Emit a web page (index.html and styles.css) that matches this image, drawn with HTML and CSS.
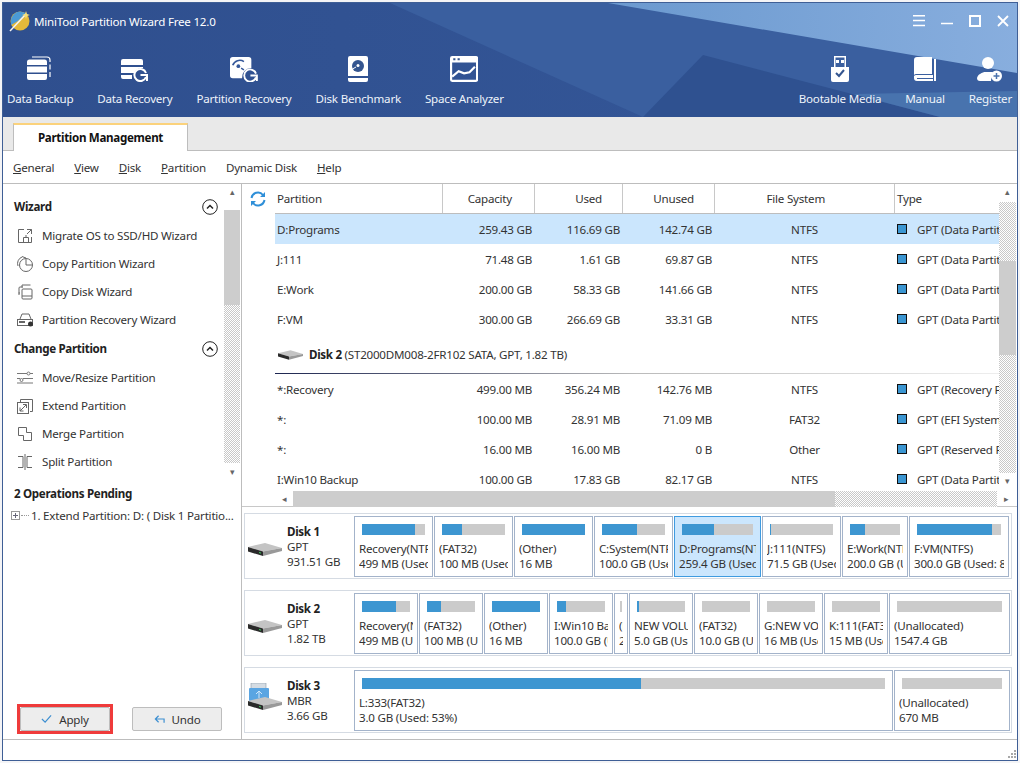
FILE: index.html
```html
<!DOCTYPE html>
<html lang="en">
<head>
<meta charset="utf-8">
<title>MiniTool Partition Wizard Free 12.0</title>
<link rel="stylesheet" href="styles.css">
</head>
<body>
<div class="window">
  <header class="header">
    <svg class="header-bg" viewBox="0 0 1014 114" preserveAspectRatio="none" aria-hidden="true">
      <defs>
        <linearGradient id="hg" x1="0" x2="1" y1="0" y2="0"><stop offset="0" stop-color="#2f4f8e"/><stop offset="1" stop-color="#35589a"/></linearGradient>
        <linearGradient id="hl" x1="0" x2="1" y1="0" y2="0"><stop offset="0" stop-color="#6b99cf"/><stop offset="1" stop-color="#88aede"/></linearGradient>
      </defs>
      <rect width="1014" height="114" fill="url(#hg)"/>
      <polygon points="387,0 1014,0 1014,114 640,114" fill="#3a5f9f"/>
      <polygon points="605,0 1014,0 1014,70" fill="url(#hl)"/>
      <polygon points="700,52 937,114 640,114" fill="#2f5190"/>
      <polygon points="937,114 1014,114 1014,88 850,91" fill="#4873ae"/>
    </svg>
    <div class="title-row">
      <svg class="logo" viewBox="0 0 22 22" aria-hidden="true">
        <circle cx="12" cy="11" r="9.5" fill="#e4b93a"/><path d="M3 11a9.500 9.500 0 0 1 9-9.500l6 1.500-8 8-7 4z" fill="#4b9ad6"/>
        <path d="M2 21L18 4" stroke="#f4f4f4" stroke-width="1.500"/><path d="M18 1l1 3 3 1-3 1-1 3-1-3-3-1 3-1z" fill="#f6e07a"/>
      </svg>
      <span class="title">MiniTool Partition Wizard Free 12.0</span>
      <div class="win-controls">
        <svg viewBox="0 0 12 12" aria-hidden="true"><path d="M0 .8h12M0 5.500h12M0 10.500h12" stroke="#fff" stroke-width="1.500"/></svg>
        <svg viewBox="0 0 12 12" aria-hidden="true"><path d="M0 8.500h12" stroke="#fff" stroke-width="1.500"/></svg>
        <svg viewBox="0 0 12 12" aria-hidden="true"><rect x="1" y="1" width="10" height="10" fill="none" stroke="#fff" stroke-width="2"/></svg>
        <svg viewBox="0 0 12 12" aria-hidden="true"><path d="M1 1l10 10M11 1L1 11" stroke="#fff" stroke-width="1.800"/></svg>
      </div>
    </div>
    <nav class="toolbar">
      <div class="tool-group">
        <div class="tool"><svg viewBox="0 0 26 26" aria-hidden="true"><path d="M0 6a2.500 2.500 0 0 1 2.500-2.500h15A2.500 2.500 0 0 1 20 6v3H0zM0 10.500h20v6H0zM0 18h20v4a2 2 0 0 1-2 2H2a2 2 0 0 1-2-2z" fill="#fff"/><path d="M5 1h15a3 3 0 0 1 3 3v2M23 8.500v5M23 16v5" fill="none" stroke="#fff" stroke-width="1.200"/></svg><span>Data Backup</span></div>
        <div class="tool"><svg viewBox="0 0 28 26" aria-hidden="true"><path d="M0 5a2 2 0 0 1 2-2h18a2 2 0 0 1 2 2v4H0zM0 11h22v1a9 9 0 0 0-9 5H0zM0 19h11v4H2a2 2 0 0 1-2-2z" fill="#fff"/><path d="M25 17a6 6 0 1 0 0 4M19.500 19h6.500v6" fill="none" stroke="#fff" stroke-width="2"/></svg><span>Data Recovery</span></div>
        <div class="tool"><svg viewBox="0 0 30 28" aria-hidden="true"><path d="M3 1h17a3 3 0 0 1 3 3v9a10 10 0 0 0-10 11H3a3 3 0 0 1-3-3V4a3 3 0 0 1 3-3z" fill="#fff"/><path d="M3 10a8 8 0 0 1 12-4" fill="none" stroke="#35589a" stroke-width="1.800"/><circle cx="9" cy="11" r="2" fill="#35589a"/><path d="M12 13l3 2" stroke="#35589a" stroke-width="1.500"/><path d="M28 19a6.500 6.500 0 1 0 0 4M22 21h7v6" fill="none" stroke="#fff" stroke-width="2"/></svg><span>Partition Recovery</span></div>
        <div class="tool"><svg viewBox="0 0 20 26" aria-hidden="true"><path d="M2 0h16a2 2 0 0 1 2 2v18H0V2a2 2 0 0 1 2-2zM0 22h20v2a2 2 0 0 1-2 2H2a2 2 0 0 1-2-2z" fill="#fff"/><circle cx="10" cy="10" r="6" fill="#34558f"/><circle cx="10" cy="9.500" r="1.500" fill="#fff"/><path d="M4.500 13l3.500-2" stroke="#fff"/></svg><span>Disk Benchmark</span></div>
        <div class="tool"><svg viewBox="0 0 26 24" aria-hidden="true"><path fill-rule="evenodd" d="M2 0h22a2 2 0 0 1 2 2v20a2 2 0 0 1-2 2H2a2 2 0 0 1-2-2V2a2 2 0 0 1 2-2zM2 6v16h22V6z" fill="#fff"/><path d="M3 2h2v2H3zM7 2h2v2H7z" fill="#34558f"/><path d="M2 19l6-5 5 2 5-1 5-5" fill="none" stroke="#fff" stroke-width="2"/></svg><span>Space Analyzer</span></div>
      </div>
      <div class="tool-group">
        <div class="tool"><svg viewBox="0 0 18 26" aria-hidden="true"><path fill-rule="evenodd" d="M3 0h12v11h3v13a2 2 0 0 1-2 2H2a2 2 0 0 1-2-2V11h3zM4.500 1.500V11h9V1.500z" fill="#fff"/><path d="M5 4h3v3H5zM10 4h3v3h-3z" fill="#fff"/><path d="M5 17l3 3 5-6" fill="none" stroke="#34558f" stroke-width="2"/></svg><span>Bootable Media</span></div>
        <div class="tool"><svg viewBox="0 0 24 26" aria-hidden="true"><path d="M5 1h14v17H4a3 3 0 0 0-3 1V4a3 3 0 0 1 3-3z" fill="#fff"/><path d="M1 20a3 3 0 0 1 3-1h16v3H4v1h16v2H4a3 3 0 0 1-3-3z" fill="#fff"/><path d="M21 3h2v22h-2z" fill="#fff"/></svg><span>Manual</span></div>
        <div class="tool"><svg viewBox="0 0 26 26" aria-hidden="true"><circle cx="11" cy="7" r="6" fill="#fff"/><path d="M0 22c1-4 5-5 7-6h8c2 1 3 1 4 2a7 7 0 0 0-5 7H3c-2 0-3-1-3-3z" fill="#fff"/><circle cx="19.500" cy="20" r="5.500" fill="#fff"/><path d="M16.500 20h6M19.500 17v6" stroke="#4a72ad" stroke-width="1.500"/></svg><span>Register</span></div>
      </div>
    </nav>
  </header>

  <div class="tabbar"><div class="tab">Partition Management</div></div>
  <div class="menubar">
    <span><u>G</u>eneral</span><span><u>V</u>iew</span><span><u>D</u>isk</span><span><u>P</u>artition</span><span>Dynamic Disk</span><span><u>H</u>elp</span>
  </div>

  <div class="workspace">
    <aside class="side">
      <div class="wizard-scroll">
        <div class="wizard-list">
          <div class="sec-title">Wizard<svg class="collapse" viewBox="0 0 16 16" aria-hidden="true"><circle cx="8" cy="8" r="7.300" fill="none" stroke="#222" stroke-width="1"/><path d="M5 9.500L8 6.500l3 3" fill="none" stroke="#222" stroke-width="1.500"/></svg></div>
          <div class="item"><svg viewBox="0 0 16 16" aria-hidden="true"><path d="M7 1.500H1.500v13h13V9M10 1.500h4.500V6M14.500 1.500L10 6M6.500 14.500V9.500h5v5M9 9.500V7" fill="none" stroke="#666"/></svg>Migrate OS to SSD/HD Wizard</div>
          <div class="item"><svg viewBox="0 0 16 16" aria-hidden="true"><path d="M5 1a7 7 0 0 0-4 9" fill="none" stroke="#666"/><circle cx="9" cy="9" r="6.500" fill="none" stroke="#666"/><path d="M9 3v6h6" fill="none" stroke="#666"/><path d="M5 .5l4 1.500" stroke="#666"/></svg>Copy Partition Wizard</div>
          <div class="item"><svg viewBox="0 0 16 16" aria-hidden="true"><path d="M5 3.500V1h8.500M2 11V4a1 1 0 0 1 1-1h3M3 9H1.500" fill="none" stroke="#666"/><rect x="5" y="5" width="10" height="10" rx="1" fill="none" stroke="#666"/><path d="M5 12h10" stroke="#666"/></svg>Copy Disk Wizard</div>
          <div class="item"><svg viewBox="0 0 16 16" aria-hidden="true"><path d="M3 7l2-5h7l2 5" fill="none" stroke="#666"/><rect x=".5" y="7.500" width="15" height="6" fill="#fff" stroke="#666"/><path d="M2 10h6" stroke="#666" stroke-width="2"/><circle cx="13.500" cy="12" r="2.500" fill="#333"/></svg>Partition Recovery Wizard</div>
          <div class="sec-title">Change Partition<svg class="collapse" viewBox="0 0 16 16" aria-hidden="true"><circle cx="8" cy="8" r="7.300" fill="none" stroke="#222" stroke-width="1"/><path d="M5 9.500L8 6.500l3 3" fill="none" stroke="#222" stroke-width="1.500"/></svg></div>
          <div class="item"><svg viewBox="0 0 16 16" aria-hidden="true"><path d="M0 3.500h10M13 3.500h3M0 8.500h3M6 8.500h10M0 13h16" stroke="#777"/><circle cx="11.500" cy="3.500" r="1.500" fill="#fff" stroke="#777"/><circle cx="4.500" cy="10" r="1.500" fill="#fff" stroke="#777"/></svg>Move/Resize Partition</div>
          <div class="item"><svg viewBox="0 0 16 16" aria-hidden="true"><path d="M3.500 4V1.500h12v12H13" fill="none" stroke="#666"/><rect x=".5" y="4.500" width="11" height="11" fill="#fff" stroke="#666"/><path d="M3 13L9 7M6 6.500h3.500V10M3 9.500V13h3.500" fill="none" stroke="#666"/></svg>Extend Partition</div>
          <div class="item"><svg viewBox="0 0 16 16" aria-hidden="true"><path d="M1.500 1.500h8v5h5v8h-8v-5h-5z" fill="none" stroke="#666"/></svg>Merge Partition</div>
          <div class="item"><svg viewBox="0 0 16 16" aria-hidden="true"><path d="M1 2.500h5v11H1M15 2.500h-5v11h5M8 0v16" fill="none" stroke="#666"/></svg>Split Partition</div>
        </div>
        <div class="vbar side-vbar"><i class="ar">▴</i><div class="track"><div class="thumb"></div></div><i class="ar">▾</i></div>
      </div>
      <div class="pending-title">2 Operations Pending</div>
      <div class="pending-row"><span class="plus"></span><span class="dots"></span>1. Extend Partition: D: ( Disk 1 Partitio...</div>
      <div class="actions">
        <div class="apply-mark"><button class="btn"><svg viewBox="0 0 12 10" aria-hidden="true"><path d="M1 5l3.500 3.500L11 1" fill="none" stroke="#3d8fd1" stroke-width="1.300"/></svg>Apply</button></div>
        <button class="btn"><svg viewBox="0 0 12 10" aria-hidden="true"><path d="M11 9V5H1.500M5 1.500L1.500 5 5 8.500" fill="none" stroke="#3d8fd1" stroke-width="1.300"/></svg>Undo</button>
      </div>
    </aside>

    <main class="main">
      <section class="table-area">
        <div class="table-wrap">
          <div class="refresh-col"><svg viewBox="0 0 16 16" aria-hidden="true"><path d="M1.500 7a6.500 6.500 0 0 1 11.500-3M14.500 9A6.500 6.500 0 0 1 3 12" fill="none" stroke="#2f8fd8" stroke-width="2"/><path d="M15 1v5h-5zM1 15v-5h5z" fill="#2f8fd8"/></svg></div>
          <div class="table">
            <div class="row head"><span>Partition</span><span class="ctr cap">Capacity</span><span class="ctr">Used</span><span class="ctr">Unused</span><span class="ctr wide">File System</span><span>Type</span></div>
            <div class="row sel"><span>D:Programs</span><span class="num">259.43 GB</span><span class="num">116.69 GB</span><span class="num">142.74 GB</span><span class="fs">NTFS</span><span class="ty"><b></b>GPT (Data Partition)</span></div>
            <div class="row"><span>J:111</span><span class="num">71.48 GB</span><span class="num">1.61 GB</span><span class="num">69.87 GB</span><span class="fs">NTFS</span><span class="ty"><b></b>GPT (Data Partition)</span></div>
            <div class="row"><span>E:Work</span><span class="num">200.00 GB</span><span class="num">58.33 GB</span><span class="num">141.66 GB</span><span class="fs">NTFS</span><span class="ty"><b></b>GPT (Data Partition)</span></div>
            <div class="row"><span>F:VM</span><span class="num">300.00 GB</span><span class="num">266.69 GB</span><span class="num">33.31 GB</span><span class="fs">NTFS</span><span class="ty"><b></b>GPT (Data Partition)</span></div>
            <div class="disk-row"><svg viewBox="0 0 34 13" aria-hidden="true"><path d="M0 4L17 0l17 5-19 3.500z" fill="#c4c4c4"/><path d="M0 4l15 4.500V13L0 8.500z" fill="#2a2a2a"/><path d="M15 8.500L34 5v3L15 13z" fill="#999"/></svg><strong>Disk 2</strong> (ST2000DM008-2FR102 SATA, GPT, 1.82 TB)</div>
            <div class="row"><span>*:Recovery</span><span class="num">499.00 MB</span><span class="num">356.24 MB</span><span class="num">142.76 MB</span><span class="fs">NTFS</span><span class="ty"><b></b>GPT (Recovery Partition)</span></div>
            <div class="row"><span>*:</span><span class="num">100.00 MB</span><span class="num">28.91 MB</span><span class="num">71.09 MB</span><span class="fs">FAT32</span><span class="ty"><b></b>GPT (EFI System partition)</span></div>
            <div class="row"><span>*:</span><span class="num">16.00 MB</span><span class="num">16.00 MB</span><span class="num">0 B</span><span class="fs">Other</span><span class="ty"><b></b>GPT (Reserved Partition)</span></div>
            <div class="row"><span>I:Win10 Backup</span><span class="num">100.00 GB</span><span class="num">17.83 GB</span><span class="num">82.17 GB</span><span class="fs">NTFS</span><span class="ty"><b></b>GPT (Data Partition)</span></div>
          </div>
          <div class="vbar table-vbar"><i class="ar">▴</i><div class="track"><div class="thumb"></div></div><i class="ar">▾</i></div>
        </div>
        <div class="hbar"><i class="ar">◂</i><div class="track"><div class="thumb"></div></div><i class="ar">▸</i></div>
      </section>

      <section class="map">
        <div class="disk">
          <div class="disk-label"><svg class="hdd" viewBox="0 0 34 13" aria-hidden="true"><path d="M0 4L17 0l17 5-19 3.500z" fill="#c4c4c4"/><path d="M0 4l15 4.500V13L0 8.500z" fill="#2a2a2a"/><path d="M15 8.500L34 5v3L15 13z" fill="#999"/><path d="M11 9.500l2 .6" stroke="#3fcf5f"/></svg><div class="disk-text"><strong>Disk 1</strong><span>GPT</span><span>931.51 GB</span></div></div>
          <div class="cards">
            <div class="card" style="width:79px"><div class="bar"><div class="fill" style="width:84%"></div></div><p>Recovery(NTFS)</p><p>499 MB (Used: 71%)</p></div>
            <div class="card" style="width:79px"><div class="bar"><div class="fill" style="width:32%"></div></div><p>(FAT32)</p><p>100 MB (Used: 28%)</p></div>
            <div class="card" style="width:79px"><div class="bar"><div class="fill" style="width:100%"></div></div><p>(Other)</p><p>16 MB</p></div>
            <div class="card" style="width:79px"><div class="bar"><div class="fill" style="width:55%"></div></div><p>C:System(NTFS)</p><p>100.0 GB (Used: 55%)</p></div>
            <div class="card on" style="width:87px"><div class="bar"><div class="fill" style="width:45%"></div></div><p>D:Programs(NTFS)</p><p>259.4 GB (Used: 45%)</p></div>
            <div class="card" style="width:79px"><div class="bar"><div class="fill" style="width:2%"></div></div><p>J:111(NTFS)</p><p>71.5 GB (Used: 2%)</p></div>
            <div class="card" style="width:66px"><div class="bar"><div class="fill" style="width:30%"></div></div><p>E:Work(NTFS)</p><p>200.0 GB (Used: 29%)</p></div>
            <div class="card" style="width:100px"><div class="bar"><div class="fill" style="width:89%"></div></div><p>F:VM(NTFS)</p><p>300.0 GB (Used: 88%)</p></div>
          </div>
        </div>
        <div class="disk">
          <div class="disk-label"><svg class="hdd" viewBox="0 0 34 13" aria-hidden="true"><path d="M0 4L17 0l17 5-19 3.500z" fill="#c4c4c4"/><path d="M0 4l15 4.500V13L0 8.500z" fill="#2a2a2a"/><path d="M15 8.500L34 5v3L15 13z" fill="#999"/><path d="M11 9.500l2 .6" stroke="#3fcf5f"/></svg><div class="disk-text"><strong>Disk 2</strong><span>GPT</span><span>1.82 TB</span></div></div>
          <div class="cards">
            <div class="card" style="width:64px"><div class="bar"><div class="fill" style="width:71%"></div></div><p>Recovery(NTFS)</p><p>499 MB (Used: 71%)</p></div>
            <div class="card" style="width:64px"><div class="bar"><div class="fill" style="width:29%"></div></div><p>(FAT32)</p><p>100 MB (Used: 28%)</p></div>
            <div class="card" style="width:64px"><div class="bar"><div class="fill" style="width:100%"></div></div><p>(Other)</p><p>16 MB</p></div>
            <div class="card" style="width:64px"><div class="bar"><div class="fill" style="width:19%"></div></div><p>I:Win10 Backup</p><p>100.0 GB (Used: 17%)</p></div>
            <div class="card tiny" style="width:14px"><div class="bar"></div><p>(NTFS)</p><p>2.0 GB</p></div>
            <div class="card" style="width:64px"><div class="bar"><div class="fill" style="width:4%"></div></div><p>NEW VOLUME</p><p>5.0 GB (Used: 3%)</p></div>
            <div class="card" style="width:64px"><div class="bar"></div><p>(FAT32)</p><p>10.0 GB (Used: 0%)</p></div>
            <div class="card" style="width:64px"><div class="bar"></div><p>G:NEW VOLUME</p><p>16 MB (Used: 0%)</p></div>
            <div class="card" style="width:64px"><div class="bar"></div><p>K:111(FAT32)</p><p>15 MB (Used: 0%)</p></div>
            <div class="card" style="width:121px"><div class="bar"></div><p>(Unallocated)</p><p>1547.4 GB</p></div>
          </div>
        </div>
        <div class="disk">
          <div class="disk-label"><svg class="hdd usb" viewBox="0 0 34 27" aria-hidden="true"><rect x="3" y="0" width="15" height="6" fill="#d5dce3" stroke="#8a99a8" stroke-width=".6"/><rect x="1" y="5" width="20" height="13" rx="1" fill="#5aa5e2"/><path d="M11 8v7M8 11l3-3 3 3" stroke="#cfe6fa" fill="none"/><path d="M0 18L17 14l17 5-19 3.500z" fill="#c4c4c4"/><path d="M0 18l15 4.500V27L0 22.500z" fill="#2a2a2a"/><path d="M15 22.500L34 19v3L15 27z" fill="#999"/><path d="M11 23.500l2 .6" stroke="#3fcf5f"/></svg><div class="disk-text"><strong>Disk 3</strong><span>MBR</span><span>3.66 GB</span></div></div>
          <div class="cards">
            <div class="card" style="width:539px"><div class="bar"><div class="fill" style="width:53.300%"></div></div><p>L:333(FAT32)</p><p>3.0 GB (Used: 53%)</p></div>
            <div class="card" style="width:116px"><div class="bar"></div><p>(Unallocated)</p><p>670 MB</p></div>
          </div>
        </div>
      </section>
    </main>
  </div>
  <footer class="status"><svg viewBox="0 0 8 8" aria-hidden="true"><path d="M6 0h2v2H6zM3 3h2v2H3zM6 3h2v2H6zM0 6h2v2H0zM3 6h2v2H3zM6 6h2v2H6z" fill="#a8a8a8"/></svg></footer>
</div>
</body>
</html>
```
FILE: styles.css
```css
* { box-sizing: border-box; }
html, body { margin: 0; padding: 0; }
body {
  width: 1020px; height: 763px; overflow: hidden;
  background: #f4f4f6;
  font: 11.600px/15px "Noto Sans", "Open Sans", sans-serif;
  letter-spacing: -.22px;
  color: #333;
  padding: 2px;
}
strong, .sec-title, .pending-title, .tab { letter-spacing: -.32px; }
.window {
  width: 1016px; height: 759px;
  border: 1px solid #3f5f96;
  background: #fff;
  display: flex; flex-direction: column;
  overflow: hidden;
}
.header { position: relative; height: 114px; flex: none; color: #fff; overflow: hidden; }
.header-bg { position: absolute; inset: 0; width: 100%; height: 100%; }
.title-row { position: relative; height: 36px; display: flex; align-items: center; padding-left: 5px; }
.logo { width: 22px; height: 22px; margin-right: 4px; }
.win-controls { margin-left: auto; display: flex; gap: 16px; padding-right: 8px; }
.win-controls svg { width: 12px; height: 12px; }
.toolbar { position: relative; display: flex; justify-content: space-between; padding: 0 5px 0 4px; }
.tool-group { display: flex; gap: 24px; }
.tool { display: flex; flex-direction: column; align-items: center; height: 72px; }
.tool svg { height: 26px; width: auto; margin-top: 17px; flex: none; }
.tool span { margin-top: 9px; white-space: nowrap; color: #eef3fa; }
.tabbar { height: 34px; flex: none; background: #e9e9e9; border-bottom: 1px solid #bdbdbd; padding: 6px 0 0 10px; }
.tab {
  width: 175px; height: 28px;
  background: #fff;
  border: 1px solid #bdbdbd; border-top: 2px solid #fbd27c; border-bottom: 0;
  text-align: center; font-weight: 700; color: #111; line-height: 26px;
}
.menubar { height: 33px; flex: none; display: flex; align-items: center; gap: 20px; padding-left: 10px; border-bottom: 1px solid #bdbdbd; }
.workspace { flex: 1; min-height: 0; display: flex; }
.side { width: 239px; flex: none; border-right: 1px solid #bdbdbd; display: flex; flex-direction: column; }
.wizard-scroll { height: 298px; flex: none; display: flex; }
.wizard-list { flex: 1; padding-top: 7.500px; }
.sec-title { height: 30px; display: flex; align-items: center; padding: 0 6px 0 11px; font-weight: 700; color: #222; justify-content: space-between; }
.collapse { width: 16px; height: 16px; }
.item { height: 28px; display: flex; align-items: center; padding-left: 14px; white-space: nowrap; }
.item svg { width: 16px; height: 16px; margin-right: 9px; flex: none; }
.vbar { display: flex; flex-direction: column; align-items: stretch; flex: none; }
.ar { font-style: normal; font-size: 9px; line-height: 16px; height: 18px; text-align: center; color: #666; flex: none; }
.track { flex: 1; min-height: 0; background: repeating-conic-gradient(#c8c8c8 0 25%, #fff 0 50%) 0 0 / 2px 2px; }
.thumb { background: #cdcdcd; }
.side-vbar { width: 16px; margin-right: 1px; }
.side-vbar .track { margin-top: 8px; margin-bottom: 1px; }
.side-vbar .thumb { height: 95px; }
.pending-title { height: 23px; flex: none; padding-left: 11px; font-weight: 700; color: #222; line-height: 23px; }
.pending-row { height: 21px; flex: none; display: flex; align-items: center; padding-left: 8px; white-space: nowrap; overflow: hidden; }
.plus { width: 9px; height: 9px; border: 1px solid #999; flex: none; background: linear-gradient(#667,#667) center/5px 1px no-repeat, linear-gradient(#667,#667) center/1px 5px no-repeat; }
.dots { width: 8px; margin-left: 1px; margin-right: 2px; border-top: 1px dotted #999; flex: none; }
.actions { margin-top: auto; height: 36px; flex: none; display: flex; padding: 0 0 8px 17px; gap: 22px; align-items: flex-end; border-bottom: 1px solid #bdbdbd; }
.apply-mark { outline: 3px solid #ef3b3b; display: flex; width: 90px; }
.btn {
  width: 90px; height: 24px; padding: 0;
  font: inherit; letter-spacing: inherit; color: #333;
  border: 1px solid #bdbdbd; border-radius: 2px; background: #ededed;
  display: flex; align-items: center; justify-content: center; gap: 7px;
}
.btn svg { width: 11px; height: 10px; }
.main { flex: 1; min-width: 0; display: flex; flex-direction: column; border-bottom: 1px solid #bdbdbd; }
.table-area { height: 323px; flex: none; display: flex; flex-direction: column; border-bottom: 1px solid #c8c8c8; }
.table-wrap { height: 307px; flex: none; display: flex; padding-left: 1px; }
.refresh-col { width: 32px; flex: none; padding: 7px 0 0 7px; }
.refresh-col svg { width: 16px; height: 16px; }
.table { flex: 1; min-width: 0; overflow: hidden; }
.row { height: 30px; display: grid; grid-template-columns: 168px 92px 88px 92px 180px 1fr; align-items: center; white-space: nowrap; }
.row > span { padding-left: 2px; overflow: hidden; }
.row.head { height: 30px; border-bottom: 1px solid #bdbdbd; }
.row.head > span { height: 100%; line-height: 29px; border-right: 1px solid #c8c8c8; }
.row.head > span:last-child { border-right: 0; }
.row.sel { background: #cbe6fd; }
.row .ctr { text-align: right; padding-right: 20px; }
.row .ctr.cap { padding-right: 22px; }
.row .ctr.wide { padding-right: 69px; }
.row .num { text-align: right; padding-right: 3px; }
.row .fs { text-align: center; padding-right: 3px; }
.ty { display: flex; align-items: center; }
.ty b { width: 10px; height: 10px; background: #3b96d2; border: 1px solid #111; margin-right: 10px; flex: none; }
.disk-row { height: 40px; display: flex; align-items: center; padding: 2px 0 0 3px; border-bottom: 1px solid transparent; border-image: linear-gradient(90deg, #1c2550, #bbb 50%, #eee) 1; white-space: pre; }
.disk-row svg { width: 25px; height: 10px; margin-right: 6px; flex: none; }
.disk-row strong { color: #222; }
.table-vbar { width: 17px; margin-right: 1px; }
.table-vbar .thumb { height: 94px; margin-top: 59px; }
.hbar { height: 16px; flex: none; margin-left: 33px; margin-right: 2px; display: flex; }
.hbar .ar { width: 18px; height: 16px; }
.hbar .track { flex: 1; display: flex; }
.hbar .thumb { width: 542px; }
.map { flex: 1; min-height: 0; padding: 6px 5px 0 2px; display: flex; flex-direction: column; gap: 11px; }
.disk { height: 66px; flex: none; width: 768px; border: 1px solid #d5dbe3; display: flex; padding: 2px 0 2px 109px; position: relative; }
.disk-label { position: absolute; left: 3px; top: 0; height: 100%; display: flex; }
.hdd { width: 34px; height: 13px; margin-top: 29px; flex: none; }
.hdd.usb { height: 27px; margin-top: 15px; }
.disk-text { position: absolute; left: 39px; padding-top: 10px; display: flex; flex-direction: column; white-space: nowrap; }
.disk-text strong { color: #222; }
.cards { display: flex; gap: 1px; }
.card { height: 61px; flex: none; border: 1px solid #a3b3ca; background: #fff; padding: 7px 6px 0; overflow: hidden; white-space: nowrap; }
.card p { margin: 0 -2px; overflow: hidden; line-height: 15px; }
.card .bar + p { margin-top: 6px; }
.bar { height: 11px; margin: 0 1px; background: #cbcbcb; }
.tiny .bar { margin: 0 -1px; }
.fill { height: 100%; background: #3d96d1; }
.card.on { background: #cbe6fd; border-color: #3f9be0; }
.status { height: 20px; flex: none; display: flex; justify-content: flex-end; align-items: flex-end; padding: 0 1px 2px 0; }
.status svg { width: 8px; height: 8px; }
```
